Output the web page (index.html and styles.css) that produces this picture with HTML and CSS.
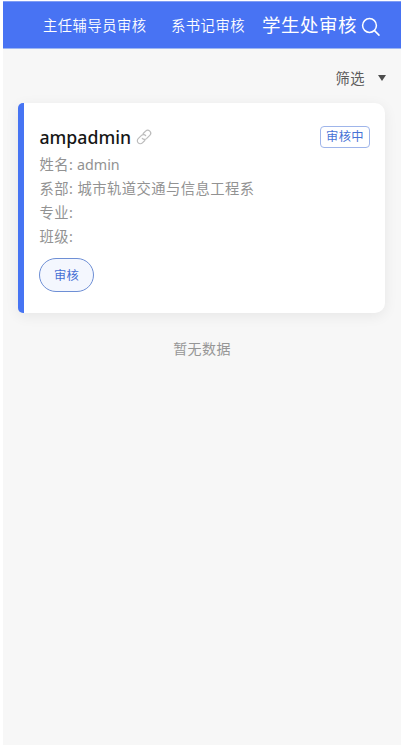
FILE: index.html
```html
<!DOCTYPE html>
<html lang="zh-CN">
<head>
<meta charset="utf-8">
<meta name="viewport" content="width=device-width, initial-scale=1">
<title>学生处审核</title>
<link rel="stylesheet" href="styles.css">
</head>
<body>
<div class="app">
  <header class="tabs">
    <span class="tab tab-first">主任辅导员审核</span>
    <span class="tab tab-second">系书记审核</span>
    <span class="tab tab-active">学生处审核</span>
    <svg class="search" viewBox="0 0 20 20" width="20" height="20"><circle cx="8.5" cy="8.5" r="6.9"/><path d="M13.5 13.6 L18 18.1"/></svg>
  </header>
  <div class="filter"><span>筛选</span><i class="caret"></i></div>
  <main class="card">
    <div class="card-head">
      <h1 class="title">ampadmin</h1>
      <svg class="link" viewBox="0 0 16 16" width="16" height="16"><path d="M7.2 4.5 L9.6 2.1 A2.9 2.9 0 0 1 13.8 6.3 L10.5 9.6 A2.9 2.9 0 0 1 6.3 9.3"/><path d="M8.8 11.5 L6.4 13.9 A2.9 2.9 0 0 1 2.2 9.7 L5.5 6.4 A2.9 2.9 0 0 1 9.7 6.7"/></svg>
      <span class="badge">审核中</span>
    </div>
    <div class="rows">
      <div class="row">姓名: <span class="latin">admin</span></div>
      <div class="row">系部: 城市轨道交通与信息工程系</div>
      <div class="row">专业:</div>
      <div class="row">班级:</div>
    </div>
    <button class="action">审核</button>
  </main>
  <p class="empty">暂无数据</p>
</div>
</body>
</html>
```

FILE: styles.css
```css
* { box-sizing: border-box; }
body {
  margin: 0;
  background: #fff;
  font-family: "Noto Sans", "Noto Sans CJK SC", sans-serif;
}
.app {
  height: 745px;
  margin: 0 1px 0 3px;
  padding-top: 1px;
  background: #f7f7f7;
  background-clip: content-box;
  overflow: hidden;
}
.tabs {
  display: flex;
  align-items: center;
  height: 48px;
  padding-left: 40px;
  background: #4873f3;
  border-top: 1px solid #7f9df4;
  border-bottom: 1px solid #9db6f2;
  color: #fff;
  white-space: nowrap;
}
.tab {
  margin-bottom: 1px;
  font-family: "Noto Sans CJK SC", sans-serif;
  font-size: 14.3px;
  font-weight: 350;
  line-height: 20px;
  letter-spacing: 0.5px;
}
.tab-first { width: 128px; }
.tab-second { width: 91px; }
.tab-active {
  width: 99px;
  margin-bottom: 2px;
  font-size: 18.5px;
  font-weight: 400;
  letter-spacing: 0.5px;
}
.search {
  margin-top: 4px;
  fill: none;
  stroke: #fff;
  stroke-width: 1.5;
  stroke-linecap: round;
}
.filter {
  display: flex;
  align-items: center;
  justify-content: flex-end;
  gap: 13px;
  height: 54px;
  padding: 3px 15px 0 0;
  color: #5c5c5c;
  font-size: 14.3px;
  letter-spacing: 0.4px;
}
.filter span { margin-top: -1px; }
.caret {
  border: 4.5px solid transparent;
  border-top: 6px solid #4d4d4d;
  border-bottom: 0;
}
.card {
  height: 210px;
  margin: 0 16px 0 15px;
  padding: 21px 15px 0 15.5px;
  border-left: 6px solid #4674f3;
  border-radius: 5px 10px 10px 5px;
  background: #fff;
  box-shadow: 0 3px 14px rgba(0, 0, 0, 0.07);
}
.card-head {
  display: flex;
  align-items: center;
  height: 26px;
}
.title {
  margin: 0;
  color: #161616;
  font-size: 17.7px;
  font-weight: 500;
  line-height: 26px;
}
.link {
  margin-left: 5px;
  fill: none;
  stroke: #bcbcbc;
  stroke-width: 1.2;
  stroke-linecap: round;
}
.badge {
  width: 50px;
  height: 22px;
  margin-left: auto;
  border: 1px solid #9fb5ea;
  border-radius: 4px;
  color: #4772d6;
  font-size: 12.3px;
  line-height: 20px;
  letter-spacing: 0.4px;
  text-align: center;
}
.rows { padding-top: 3px; }
.row {
  height: 24px;
  color: #929292;
  font-size: 14.3px;
  line-height: 24px;
  letter-spacing: 0.45px;
}
.latin {
  margin-left: -0.5px;
  letter-spacing: 0;
}
.action {
  display: block;
  width: 55px;
  height: 34px;
  margin: 9px 0 0 -0.5px;
  padding: 0;
  border: 1px solid #6e8fd5;
  border-radius: 17px;
  background: #f4f7fe;
  color: #4770d4;
  font: 12.3px/31px "Noto Sans CJK SC", sans-serif;
  letter-spacing: 0.2px;
}
.empty {
  margin: 25px 0 0;
  color: #969696;
  font-size: 14px;
  line-height: 22px;
  letter-spacing: 0.4px;
  text-align: center;
}
```
